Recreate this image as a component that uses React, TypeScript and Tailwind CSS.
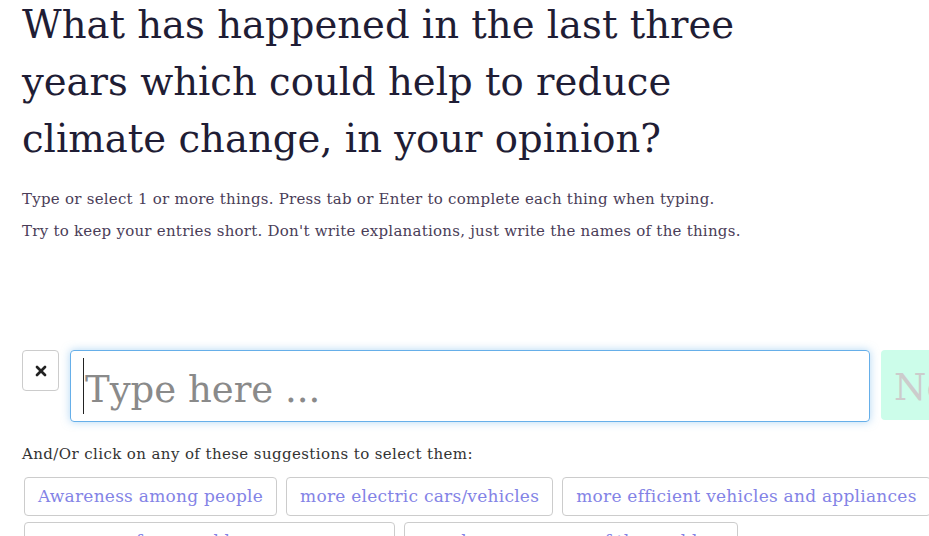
import { X } from "lucide-react";

const suggestions = [
  "Awareness among people",
  "more electric cars/vehicles",
  "more efficient vehicles and appliances",
  "more use of renewable energy sources",
  "people more aware of the problem",
  "global agreements on climate",
];

const slab = { fontFamily: '"DejaVu Serif", "Liberation Serif", serif' };

export default function App() {
  return (
    <div className="w-[929px] h-[536px] overflow-hidden bg-white" style={slab}>
      <div className="w-[1020px] pl-[22px]">
        {/* Question */}
        <h1 className="mt-[-4px] text-[38.6px] leading-[57px] font-light text-[#1f1d35] w-[730px]">
          What has happened in the last three years which could help to reduce climate change, in your opinion?
        </h1>

        {/* Instructions */}
        <div className="mt-[16px] text-[15px] tracking-[0.25px] leading-[32px] text-[#4a3d58]">
          <p>Type or select 1 or more things. Press tab or Enter to complete each thing when typing.</p>
          <p>Try to keep your entries short. Don't write explanations, just write the names of the things.</p>
        </div>

        {/* Input row */}
        <div className="mt-[103px] flex items-start">
          <button className="w-[37px] h-[41px] border border-[#cccccc] rounded-[4px] flex items-center justify-center bg-white">
            <X className="w-[16px] h-[16px] text-[#222]" strokeWidth={4} />
          </button>
          <div className="ml-[11px] w-[800px] h-[72px] border border-[#66afe9] rounded-[4px] shadow-[0_0_8px_rgba(102,175,233,0.5)] flex items-center pl-[12px]">
            <span className="w-px h-[56px] bg-[#222]" />
            <span className="pt-[7px] text-[37px] text-[#8a8a8a] ml-[1px]">Type here ...</span>
          </div>
          <button className="ml-[11px] h-[70px] pl-[13px] pr-[14px] pt-[6px] bg-[#ccfdea] rounded-[4px] text-[37px] text-[#cccccc]">
            Next
          </button>
        </div>

        {/* Suggestions */}
        <p className="mt-[22px] text-[15px] tracking-[0.4px] text-[#333] leading-[20px]">
          And/Or click on any of these suggestions to select them:
        </p>
        <div className="mt-[13px] ml-[2px] flex flex-wrap gap-x-[9px] gap-y-[6px] w-[990px]">
          {suggestions.map((s) => (
            <span
              key={s}
              className="h-[39px] px-[13px] border border-[#cccccc] rounded-[4px] text-[17px] tracking-[0.25px] text-[#8383e6] flex items-center"
            >
              {s}
            </span>
          ))}
        </div>
      </div>
    </div>
  );
}
